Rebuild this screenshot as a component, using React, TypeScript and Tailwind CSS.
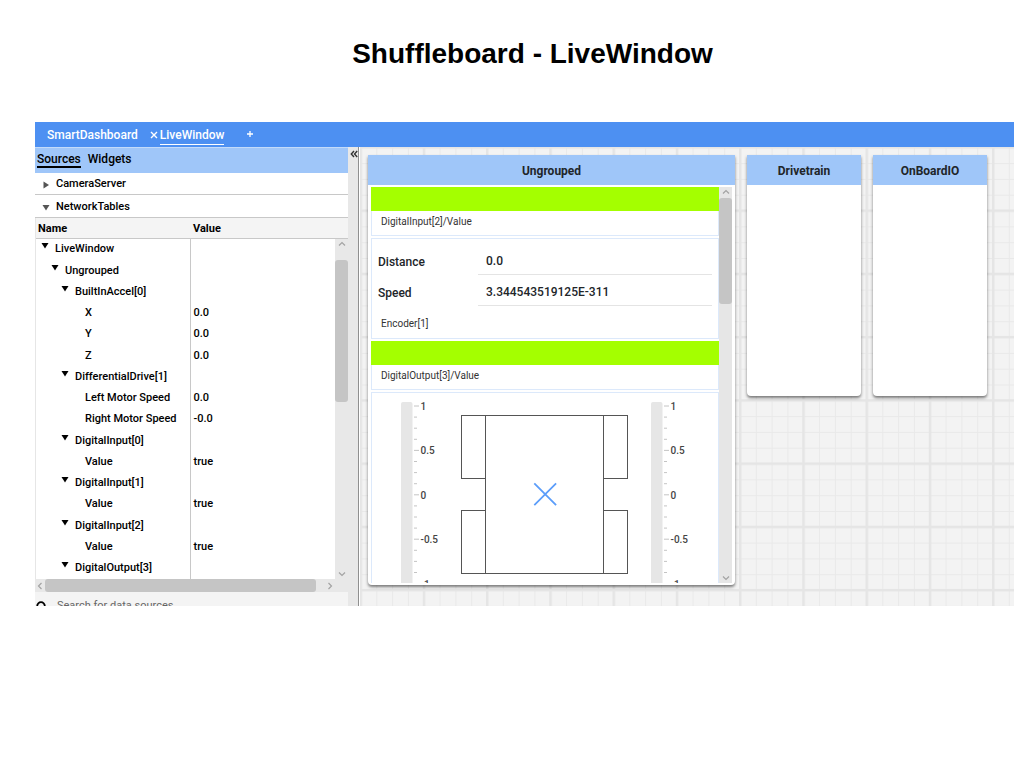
import React from "react";

type TreeRow = { label: string; depth: number; value?: string };

const treeRows: TreeRow[] = [
  { label: "LiveWindow", depth: 0 },
  { label: "Ungrouped", depth: 1 },
  { label: "BuiltInAccel[0]", depth: 2 },
  { label: "X", depth: 3, value: "0.0" },
  { label: "Y", depth: 3, value: "0.0" },
  { label: "Z", depth: 3, value: "0.0" },
  { label: "DifferentialDrive[1]", depth: 2 },
  { label: "Left Motor Speed", depth: 3, value: "0.0" },
  { label: "Right Motor Speed", depth: 3, value: "-0.0" },
  { label: "DigitalInput[0]", depth: 2 },
  { label: "Value", depth: 3, value: "true" },
  { label: "DigitalInput[1]", depth: 2 },
  { label: "Value", depth: 3, value: "true" },
  { label: "DigitalInput[2]", depth: 2 },
  { label: "Value", depth: 3, value: "true" },
  { label: "DigitalOutput[3]", depth: 2 },
];

const indents = ["pl-[5px]", "pl-[15px]", "pl-[25px]", "pl-[35px]"];

const chevrons = {
  up: "M2 6.5 L5 3.5 L8 6.5",
  down: "M2 3.5 L5 6.5 L8 3.5",
  left: "M6.5 2 L3.5 5 L6.5 8",
  right: "M3.5 2 L6.5 5 L3.5 8",
};

function Chevron({ dir }: { dir: keyof typeof chevrons }) {
  return (
    <svg viewBox="0 0 10 10" className="size-[10px] shrink-0" aria-hidden="true">
      <path d={chevrons[dir]} fill="none" stroke="#a3a3a3" strokeWidth="1.2" />
    </svg>
  );
}

function Disclosure({ open, dark }: { open: boolean; dark?: boolean }) {
  return (
    <svg viewBox="0 0 8 8" className="size-2 shrink-0" aria-hidden="true">
      <path
        d={open ? "M0.5 2 H7.5 L4 7.5 Z" : "M1.5 0.5 V7.5 L7 4 Z"}
        fill={dark ? "#000" : "#555"}
      />
    </svg>
  );
}

function GridBackdrop() {
  return (
    <svg className="absolute inset-0 size-full" aria-hidden="true">
      <defs>
        <pattern id="minor" x="0.5" y="0.3" width="15.8125" height="15.8125" patternUnits="userSpaceOnUse">
          <path d="M0.5 0 V15.8125 M0 0.5 H15.8125" stroke="#e9e9e9" strokeWidth="1" />
        </pattern>
        <pattern id="major" x="-0.5" y="-0.8" width="63.25" height="63.25" patternUnits="userSpaceOnUse">
          <path d="M1.25 0 V63.25 M0 1.25 H63.25" stroke="#e5e5e5" strokeWidth="2.5" />
        </pattern>
      </defs>
      <rect width="100%" height="100%" fill="#f3f3f3" />
      <rect width="100%" height="100%" fill="url(#minor)" />
      <rect width="100%" height="100%" fill="url(#major)" />
    </svg>
  );
}

function Card({ title, className, children }: { title: string; className: string; children?: React.ReactNode }) {
  return (
    <section className={`flex flex-col rounded-b bg-white shadow-[0_2px_3px_rgba(0,0,0,0.5)] ${className}`}>
      <h2 className="h-[30px] bg-[#9fc6f9] text-center text-xs leading-8 font-bold text-[#212529]">{title}</h2>
      {children}
    </section>
  );
}

function Field({ id, label, value }: { id: string; label: string; value: string }) {
  return (
    <div className="flex h-[31px] items-center">
      <label htmlFor={id} className="w-[100px] text-xs font-medium">
        {label}
      </label>
      <input
        id={id}
        defaultValue={value}
        className="h-[26px] min-w-0 flex-1 border-b border-[#e4e4e4] bg-transparent px-2 text-xs font-medium outline-none"
      />
    </div>
  );
}

function BooleanWidget({ title }: { title: string }) {
  return (
    <div>
      <div className="h-6 bg-[#a4ff00]" />
      <p className="h-[25px] border border-t-0 border-[#dce9fb] pl-[9px] text-[10px] leading-[22px] text-[#333]">
        {title}
      </p>
    </div>
  );
}

const gaugeLabels = ["1", "0.5", "0", "-0.5", "-1"];

function Gauge() {
  return (
    <svg viewBox="0 0 60 190" className="h-[190px] w-[60px] shrink-0">
      <rect x="0" y="9" width="11.5" height="190" rx="2" fill="#e6e6e6" />
      {Array.from({ length: 17 }, (_, i) => (
        <line
          key={i}
          x1="13"
          x2={i % 4 === 0 ? 18 : 16}
          y1={13 + i * 11.1}
          y2={13 + i * 11.1}
          stroke="#b5b5b5"
          strokeWidth="0.8"
        />
      ))}
      {gaugeLabels.map((label, i) => (
        <text key={label} x="19.5" y={17 + i * 44.4} fontSize="10" fontWeight="500" fill="#444">
          {label}
        </text>
      ))}
    </svg>
  );
}

function Chassis() {
  return (
    <svg viewBox="0 0 168 190" className="mr-[22px] h-[190px] w-[168px] shrink-0" aria-label="Drivetrain">
      <g fill="none" stroke="#555" strokeWidth="1">
        <rect x="24.5" y="22.5" width="118" height="158" />
        <rect x="0.5" y="22.5" width="24" height="63" />
        <rect x="0.5" y="117.5" width="24" height="63" />
        <rect x="142.5" y="22.5" width="24" height="63" />
        <rect x="142.5" y="117.5" width="24" height="63" />
      </g>
      <path d="M73.3 90.3 L95.1 112.1 M95.1 90.3 L73.3 112.1" stroke="#5b9dfa" strokeWidth="1.8" />
    </svg>
  );
}

function Sidebar() {
  return (
    <aside className="flex w-[313px] shrink-0 flex-col bg-[#f4f4f4]">
      <nav className="flex h-[26px] gap-[7px] border-t border-[#c3dbfa] bg-[#9fc6f9] px-0.5 text-xs font-medium">
        <button className="h-5 border-b-2 border-black pt-[3px]">Sources</button>
        <button className="h-5 border-b-2 border-transparent pt-[3px]">Widgets</button>
      </nav>
      <button className="flex h-[22px] items-center gap-[6px] border-b border-[#c8c8c8] bg-white px-[7px] pt-0.5 text-[11px] font-medium">
        <Disclosure open={false} />
        CameraServer
      </button>
      <button className="flex h-[23px] items-center gap-[6px] border-b border-[#c8c8c8] bg-white px-[7px] pt-0.5 text-[11px] font-medium">
        <Disclosure open />
        NetworkTables
      </button>
      <div className="flex h-[361px] border-l border-[#e6e6e6]">
        <table className="h-[361px] flex-1 table-fixed border-collapse text-left text-[11px] font-medium">
          <thead>
            <tr className="h-5 border-b border-[#c8c8c8]">
              <th className="w-[154px] px-0.5 pt-[3px] pb-0 leading-4 font-bold">Name</th>
              <th className="px-[3px] pt-[3px] pb-0 leading-4 font-bold">Value</th>
            </tr>
          </thead>
          <tbody className="bg-white">
            {treeRows.map((row, i) => (
              <tr key={i}>
                <td className={`border-r border-[#c8c8c8] py-0 leading-4 ${indents[row.depth]}`}>
                  <div className="flex gap-[6px]">
                    <span className="w-2">{row.value === undefined && <Disclosure open dark />}</span>
                    <span className="whitespace-nowrap">{row.label}</span>
                  </div>
                </td>
                <td className="px-[3px] py-0 leading-4">{row.value}</td>
              </tr>
            ))}
          </tbody>
        </table>
        <div className="mt-5 flex w-[13px] flex-col items-center justify-between border-t border-[#c8c8c8] bg-[#e8e8e8]">
          <Chevron dir="up" />
          <div className="mt-[11px] mb-auto h-[142px] w-full rounded-[3px] bg-[#c5c5c5]" />
          <Chevron dir="down" />
        </div>
      </div>
      <div className="flex h-[13px] shrink-0 items-center bg-[#e8e8e8]">
        <Chevron dir="left" />
        <div className="mr-[9px] h-full flex-1 rounded-[3px] bg-[#c5c5c5]" />
        <Chevron dir="right" />
        <span className="w-[13px]" />
      </div>
      <div className="flex flex-1 overflow-hidden pt-[6px] pl-px">
        <svg viewBox="0 0 12 12" className="mt-[3px] size-3 shrink-0" aria-hidden="true">
          <circle cx="5" cy="5" r="3.8" fill="none" stroke="#000" strokeWidth="1.8" />
          <path d="M7.8 7.8 L11 11" stroke="#000" strokeWidth="1.8" />
        </svg>
        <input
          aria-label="Search for data sources"
          placeholder="Search for data sources"
          className="ml-[9px] h-4 min-w-0 flex-1 bg-transparent text-[11px] outline-none placeholder:text-[#666]"
        />
      </div>
    </aside>
  );
}

function UngroupedContent() {
  return (
    <div className="flex min-h-0 flex-1 p-[2px_3px_2px_3px]">
      <div className="flex min-w-0 flex-1 flex-col gap-0.5 overflow-hidden text-[#212529]">
        <BooleanWidget title="DigitalInput[2]/Value" />
        <div className="h-[101px] shrink-0 border border-[#dce9fb] pt-[7px] pr-[6px] pl-[6px]">
          <Field id="distance" label="Distance" value="0.0" />
          <Field id="speed" label="Speed" value="3.344543519125E-311" />
          <p className="pl-[3px] text-[10px] leading-8 text-[#333]">Encoder[1]</p>
        </div>
        <BooleanWidget title="DigitalOutput[3]/Value" />
        <div className="flex min-h-0 flex-1 overflow-hidden border border-b-0 border-[#dce9fb] pl-[29px]">
          <Gauge />
          <Chassis />
          <Gauge />
        </div>
      </div>
      <div className="flex w-[13px] flex-col items-center justify-between bg-[#e6e6e6]">
        <Chevron dir="up" />
        <div className="mt-px mb-auto h-[106px] w-full rounded-[3px] bg-[#c5c5c5]" />
        <Chevron dir="down" />
      </div>
    </div>
  );
}

export default function App() {
  return (
    <div className="min-h-screen bg-white pr-[10px] pl-[35px] font-['Roboto',sans-serif]">
      <h1 className="pt-[33px] pb-[47px] pl-4 text-center font-['Liberation_Sans',sans-serif] text-[28px] leading-[42px] font-bold">
        Shuffleboard - LiveWindow
      </h1>
      <main className="flex h-[484px] flex-col overflow-hidden">
        <nav className="flex h-[25px] shrink-0 bg-[#4d90f2] pt-[3px] pl-3 text-xs font-medium text-white">
          <button className="mr-3 h-5">SmartDashboard</button>
          <button className="flex h-5 items-center gap-[2px]">
            <svg viewBox="0 0 8 8" className="size-2" aria-hidden="true">
              <path d="M1 1 L7 7 M7 1 L1 7" stroke="#fff" strokeWidth="1.4" />
            </svg>
            <span className="h-[19px] border-b border-white leading-[19px]">LiveWindow</span>
          </button>
          <button className="ml-[22px] h-[18px]" aria-label="Add tab">
            <svg viewBox="0 0 8 8" className="size-2" aria-hidden="true">
              <path d="M4 1 V7 M1 4 H7" stroke="#fff" strokeWidth="1.3" />
            </svg>
          </button>
        </nav>
        <div className="flex min-h-0 flex-1">
          <Sidebar />
          <button
            aria-label="Collapse sidebar"
            className="flex w-[11px] shrink-0 items-start border-r border-[#8f8f8f] bg-[#e8e8e8] pt-[3px] pl-0.5"
          >
            <svg viewBox="0 0 8 8" className="size-2" aria-hidden="true">
              <path d="M4 1 L1.3 4 L4 7 M7.2 1 L4.5 4 L7.2 7" fill="none" stroke="#333" strokeWidth="1.4" />
            </svg>
          </button>
          <div className="relative ml-px flex min-w-0 flex-1">
            <GridBackdrop />
            <div className="relative flex flex-1 items-start gap-3 pt-2 pl-2">
              <Card title="Ungrouped" className="h-[430px] w-[367px] shrink-0">
                <UngroupedContent />
              </Card>
              <Card title="Drivetrain" className="h-[241px] w-[114px] shrink-0" />
              <Card title="OnBoardIO" className="h-[241px] w-[114px] shrink-0" />
            </div>
          </div>
        </div>
      </main>
    </div>
  );
}
